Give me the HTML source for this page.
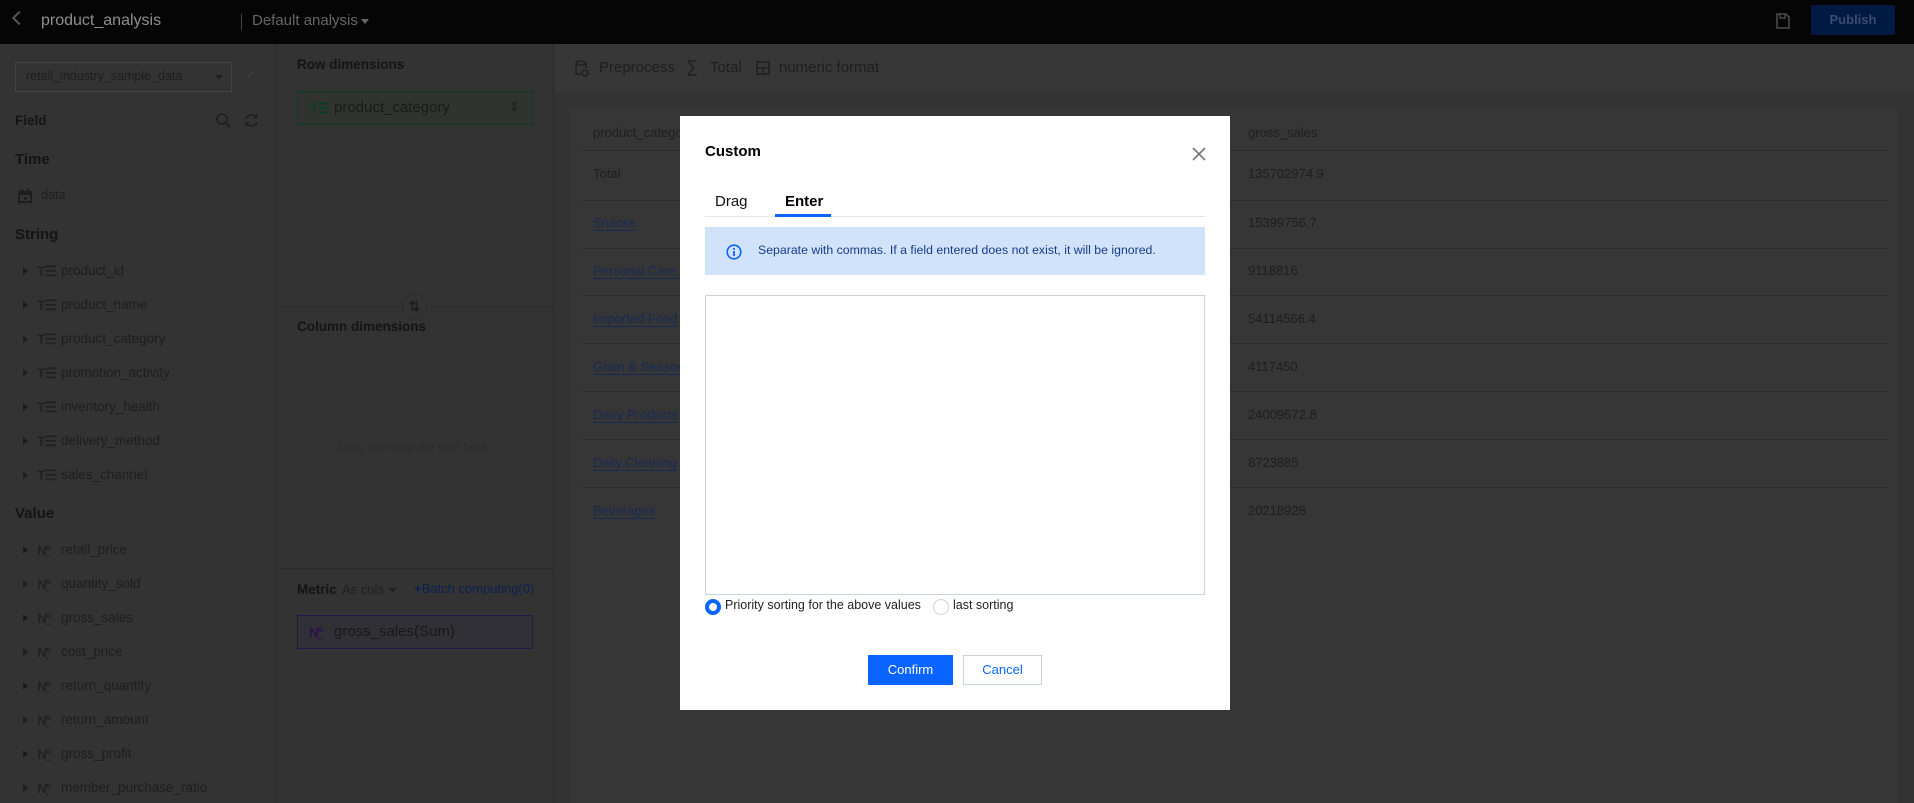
<!DOCTYPE html>
<html><head><meta charset="utf-8"><style>
*{box-sizing:border-box;margin:0;padding:0}
body{width:1914px;height:803px;overflow:hidden;background:#333;font-family:"Liberation Sans",Arial,sans-serif;position:relative;color:#1f1f1f}
.a{position:absolute;white-space:nowrap}
.top{left:0;top:0;width:1914px;height:44px;background:#050505}
.sec{font-weight:bold;font-size:15px;color:#141414}
.it{font-size:13.5px;color:#1e1e1e}
.arr{width:0;height:0;border-top:4px solid transparent;border-bottom:4px solid transparent;border-left:5px solid #1e1e1e}
.ti{font-size:14px;color:#222;font-weight:bold;letter-spacing:-1px}
.lk{font-size:13px;color:#172a55;text-decoration:underline;text-underline-offset:3px}
.tx{font-size:13px;color:#1e1e1e}
.row{height:1px;background:#2d2d2d}
</style></head><body>
<div class="a top"></div>
<div class="a" style="left:14px;top:13px;width:10px;height:10px;border-left:2px solid #555;border-bottom:2px solid #555;transform:rotate(45deg)"></div>
<div class="a" style="left:41px;top:12px;font-size:16px;color:#8f8f8f">product_analysis</div>
<div class="a" style="left:241px;top:14px;width:1px;height:16px;background:#444"></div>
<div class="a" style="left:252px;top:12px;font-size:15px;color:#666">Default analysis</div>
<div class="a" style="left:361px;top:19px;border-left:4px solid transparent;border-right:4px solid transparent;border-top:5px solid #666"></div>
<svg class="a" style="left:1776px;top:13px" width="14" height="16" viewBox="0 0 14 16"><path d="M1 1h9l3 3v11H1z" fill="none" stroke="#4a4a4a" stroke-width="1.6"/><path d="M4 1v4h5V1" fill="none" stroke="#4a4a4a" stroke-width="1.4"/></svg>
<div class="a" style="left:1811px;top:5px;width:84px;height:30px;background:#011a44;border-radius:2px;color:#3b4d6e;font-size:13px;font-weight:bold;text-align:center;line-height:30px">Publish</div>

<!-- left panel -->
<div class="a" style="left:276px;top:44px;width:1px;height:759px;background:#2c2c2c"></div>
<div class="a" style="left:15px;top:62px;width:217px;height:30px;border:1px solid #444"></div>
<div class="a it" style="left:26px;top:69px;font-size:12.5px">retail_industry_sample_data</div>
<div class="a" style="left:215px;top:75px;border-left:4px solid transparent;border-right:4px solid transparent;border-top:5px solid #222"></div>
<svg class="a" style="left:244px;top:69px" width="12" height="12"><path d="M2 10l1-3 6-6 2 2-6 6z" fill="#3a3a3a"/></svg>
<div class="a sec" style="left:15px;top:113px;font-size:13.5px">Field</div>
<svg class="a" style="left:216px;top:113px" width="15" height="15"><circle cx="6" cy="6" r="5" fill="none" stroke="#1e1e1e" stroke-width="1.6"/><path d="M10 10l4 4" stroke="#1e1e1e" stroke-width="1.8"/></svg>
<svg class="a" style="left:244px;top:113px" width="15" height="15"><path d="M2 6a6 6 0 0 1 11-1M13 9a6 6 0 0 1-11 1" fill="none" stroke="#1e1e1e" stroke-width="1.5"/><path d="M13 1v4h-4M2 14v-4h4" fill="none" stroke="#1e1e1e" stroke-width="1.3"/></svg>
<div class="a sec" style="left:15px;top:151px">Time</div>
<svg class="a" style="left:18px;top:189px" width="14" height="14"><rect x="0" y="2" width="14" height="12" fill="#1e1e1e"/><rect x="2" y="6" width="10" height="6" fill="#333"/><rect x="6" y="8" width="3" height="3" fill="#1e1e1e"/><rect x="3" y="0" width="2" height="3" fill="#1e1e1e"/><rect x="9" y="0" width="2" height="3" fill="#1e1e1e"/></svg>
<div class="a it" style="left:41px;top:188px;font-size:12.5px">data</div>
<div class="a sec" style="left:15px;top:226px">String</div>

<div class="a arr" style="left:23px;top:267px"></div><div class="a ti" style="left:37px;top:263px">T☰</div><div class="a it" style="left:61px;top:263px">product_id</div>
<div class="a arr" style="left:23px;top:301px"></div><div class="a ti" style="left:37px;top:297px">T☰</div><div class="a it" style="left:61px;top:297px">product_name</div>
<div class="a arr" style="left:23px;top:335px"></div><div class="a ti" style="left:37px;top:331px">T☰</div><div class="a it" style="left:61px;top:331px">product_category</div>
<div class="a arr" style="left:23px;top:369px"></div><div class="a ti" style="left:37px;top:365px">T☰</div><div class="a it" style="left:61px;top:365px">promotion_activity</div>
<div class="a arr" style="left:23px;top:403px"></div><div class="a ti" style="left:37px;top:399px">T☰</div><div class="a it" style="left:61px;top:399px">inventory_health</div>
<div class="a arr" style="left:23px;top:437px"></div><div class="a ti" style="left:37px;top:433px">T☰</div><div class="a it" style="left:61px;top:433px">delivery_method</div>
<div class="a arr" style="left:23px;top:471px"></div><div class="a ti" style="left:37px;top:467px">T☰</div><div class="a it" style="left:61px;top:467px">sales_channel</div>
<div class="a sec" style="left:15px;top:505px">Value</div>
<div class="a arr" style="left:23px;top:546px"></div><div class="a ti" style="left:37px;top:542px">N<u>º</u></div><div class="a it" style="left:61px;top:542px">retail_price</div>
<div class="a arr" style="left:23px;top:580px"></div><div class="a ti" style="left:37px;top:576px">N<u>º</u></div><div class="a it" style="left:61px;top:576px">quantity_sold</div>
<div class="a arr" style="left:23px;top:614px"></div><div class="a ti" style="left:37px;top:610px">N<u>º</u></div><div class="a it" style="left:61px;top:610px">gross_sales</div>
<div class="a arr" style="left:23px;top:648px"></div><div class="a ti" style="left:37px;top:644px">N<u>º</u></div><div class="a it" style="left:61px;top:644px">cost_price</div>
<div class="a arr" style="left:23px;top:682px"></div><div class="a ti" style="left:37px;top:678px">N<u>º</u></div><div class="a it" style="left:61px;top:678px">return_quantity</div>
<div class="a arr" style="left:23px;top:716px"></div><div class="a ti" style="left:37px;top:712px">N<u>º</u></div><div class="a it" style="left:61px;top:712px">return_amount</div>
<div class="a arr" style="left:23px;top:750px"></div><div class="a ti" style="left:37px;top:746px">N<u>º</u></div><div class="a it" style="left:61px;top:746px">gross_profit</div>
<div class="a arr" style="left:23px;top:784px"></div><div class="a ti" style="left:37px;top:780px">N<u>º</u></div><div class="a it" style="left:61px;top:780px">member_purchase_ratio</div>

<!-- middle -->
<div class="a" style="left:553px;top:44px;width:1px;height:759px;background:#2c2c2c"></div>
<div class="a sec" style="left:297px;top:57px;font-size:13.5px">Row dimensions</div>
<div class="a" style="left:297px;top:91px;width:236px;height:34px;border:1px solid #0b3a1e;background:#303330"></div>
<div class="a ti" style="left:310px;top:100px;color:#0d3d1f">T☰</div>
<div class="a it" style="left:334px;top:99px;font-size:15px;color:#1a1a1a">product_category</div>
<div class="a" style="left:509px;top:99px;font-size:13px;color:#1e1e1e">⇕</div>
<div class="a" style="left:278px;top:306px;width:275px;height:1px;background:#2c2c2c"></div>
<div class="a" style="left:402px;top:294px;width:25px;height:25px;border-radius:50%;border:1px solid #2c2c2c;background:#333;font-size:14px;font-weight:bold;text-align:center;line-height:23px;color:#1e1e1e">⇅</div>
<div class="a sec" style="left:297px;top:319px;font-size:13.5px">Column dimensions</div>
<div class="a" style="left:338px;top:440px;font-size:12px;color:#2b2b2b">Drag and drop the field here.</div>
<div class="a" style="left:278px;top:568px;width:275px;height:1px;background:#2c2c2c"></div>
<div class="a sec" style="left:297px;top:582px;font-size:13.5px">Metric</div>
<div class="a it" style="left:342px;top:582px;font-size:13px">As cols</div>
<div class="a" style="left:389px;top:588px;border-left:4px solid transparent;border-right:4px solid transparent;border-top:5px solid #222"></div>
<div class="a" style="left:414px;top:581px;font-size:13px;color:#0c2150"><b>+</b>Batch computing(0)</div>
<div class="a" style="left:297px;top:615px;width:236px;height:34px;border:1px solid #2a1748;background:#313036"></div>
<div class="a ti" style="left:309px;top:624px;color:#28124a">N<u>º</u></div>
<div class="a it" style="left:334px;top:623px;font-size:15px;color:#1a1a1a">gross_sales(Sum)</div>

<!-- right -->
<div class="a" style="left:555px;top:44px;width:1359px;height:48px;background:#373737"></div>
<svg class="a" style="left:575px;top:60px" width="14" height="17"><ellipse cx="6" cy="3" rx="5" ry="2" fill="none" stroke="#1e1e1e" stroke-width="1.3"/><path d="M1 3v11h5M11 3v5" fill="none" stroke="#1e1e1e" stroke-width="1.3"/><circle cx="10" cy="13" r="3" fill="none" stroke="#1e1e1e" stroke-width="1.3"/></svg>
<div class="a" style="left:599px;top:59px;font-size:15px;color:#1e1e1e">Preprocess</div>
<div class="a" style="left:686px;top:57px;font-size:17px;color:#1e1e1e">∑</div>
<div class="a" style="left:710px;top:59px;font-size:15px;color:#1e1e1e">Total</div>
<svg class="a" style="left:756px;top:61px" width="14" height="14"><rect x="1" y="1" width="12" height="12" fill="none" stroke="#1e1e1e" stroke-width="1.5"/><path d="M1 7h12M7 7v6" stroke="#1e1e1e" stroke-width="1.5"/></svg>
<div class="a" style="left:779px;top:59px;font-size:15px;color:#1e1e1e">numeric format</div>
<div class="a" style="left:570px;top:108px;width:1328px;height:695px;background:#363636"></div>
<div class="a tx" style="left:593px;top:125px">product_category</div>
<div class="a tx" style="left:1248px;top:125px">gross_sales</div>
<div class="a row" style="left:581px;top:150px;width:1307px"></div>
<div class="a tx" style="left:593px;top:166px">Total</div><div class="a tx" style="left:1248px;top:166px">135702974.9</div>
<div class="a row" style="left:581px;top:200px;width:1307px"></div>
<div class="a lk" style="left:593px;top:215px">Snacks</div><div class="a tx" style="left:1248px;top:215px">15399756.7</div>
<div class="a row" style="left:581px;top:248px;width:1307px"></div>
<div class="a lk" style="left:593px;top:263px">Personal Care &amp;</div><div class="a tx" style="left:1248px;top:263px">9118816</div>
<div class="a row" style="left:581px;top:295px;width:1307px"></div>
<div class="a lk" style="left:593px;top:311px">Imported Food</div><div class="a tx" style="left:1248px;top:311px">54114566.4</div>
<div class="a row" style="left:581px;top:343px;width:1307px"></div>
<div class="a lk" style="left:593px;top:359px">Grain &amp; Seasoning</div><div class="a tx" style="left:1248px;top:359px">4117450</div>
<div class="a row" style="left:581px;top:391px;width:1307px"></div>
<div class="a lk" style="left:593px;top:407px">Dairy Products</div><div class="a tx" style="left:1248px;top:407px">24009572.8</div>
<div class="a row" style="left:581px;top:439px;width:1307px"></div>
<div class="a lk" style="left:593px;top:455px">Daily Cleaning</div><div class="a tx" style="left:1248px;top:455px">8723885</div>
<div class="a row" style="left:581px;top:487px;width:1307px"></div>
<div class="a lk" style="left:593px;top:503px">Beverages</div><div class="a tx" style="left:1248px;top:503px">20218928</div>

<!-- modal -->
<div class="a" style="left:680px;top:116px;width:550px;height:594px;background:#fff"></div>
<div class="a" style="left:705px;top:143px;font-size:15px;font-weight:bold;color:#000">Custom</div>
<svg class="a" style="left:1192px;top:147px" width="14" height="14"><path d="M1 1l12 12M13 1L1 13" stroke="#777" stroke-width="1.6"/></svg>
<div class="a" style="left:715px;top:193px;font-size:15px;color:#111">Drag</div>
<div class="a" style="left:785px;top:193px;font-size:15px;font-weight:bold;color:#000">Enter</div>
<div class="a" style="left:705px;top:216px;width:500px;height:1px;background:#e3e6eb"></div>
<div class="a" style="left:775px;top:214px;width:56px;height:3px;background:#0a64ff"></div>
<div class="a" style="left:705px;top:227px;width:500px;height:48px;background:#d1e3fb"></div>
<svg class="a" style="left:726px;top:244px" width="16" height="16"><circle cx="8" cy="8" r="6.8" fill="none" stroke="#0a64ff" stroke-width="1.6"/><rect x="7.1" y="7" width="1.8" height="5" fill="#0a64ff"/><rect x="7.1" y="4" width="1.8" height="1.8" fill="#0a64ff"/></svg>
<div class="a" style="left:758px;top:243px;font-size:12.3px;color:#1a3b8a">Separate with commas. If a field entered does not exist, it will be ignored.</div>
<div class="a" style="left:705px;top:295px;width:500px;height:300px;border:1px solid #cdd2d9"></div>
<div class="a" style="left:705px;top:599px;width:16px;height:16px;border-radius:50%;border:4px solid #0a64ff"></div>
<div class="a" style="left:725px;top:598px;font-size:12.5px;color:#222">Priority sorting for the above values</div>
<div class="a" style="left:933px;top:599px;width:16px;height:16px;border-radius:50%;border:1px solid #cdd2d9"></div>
<div class="a" style="left:953px;top:598px;font-size:12.5px;color:#222">last sorting</div>
<div class="a" style="left:868px;top:655px;width:85px;height:30px;background:#0a64ff;color:#fff;font-size:13px;text-align:center;line-height:30px">Confirm</div>
<div class="a" style="left:963px;top:655px;width:79px;height:30px;border:1px solid #cdd2d9;color:#0a64ff;font-size:13px;text-align:center;line-height:28px">Cancel</div>
</body></html>
